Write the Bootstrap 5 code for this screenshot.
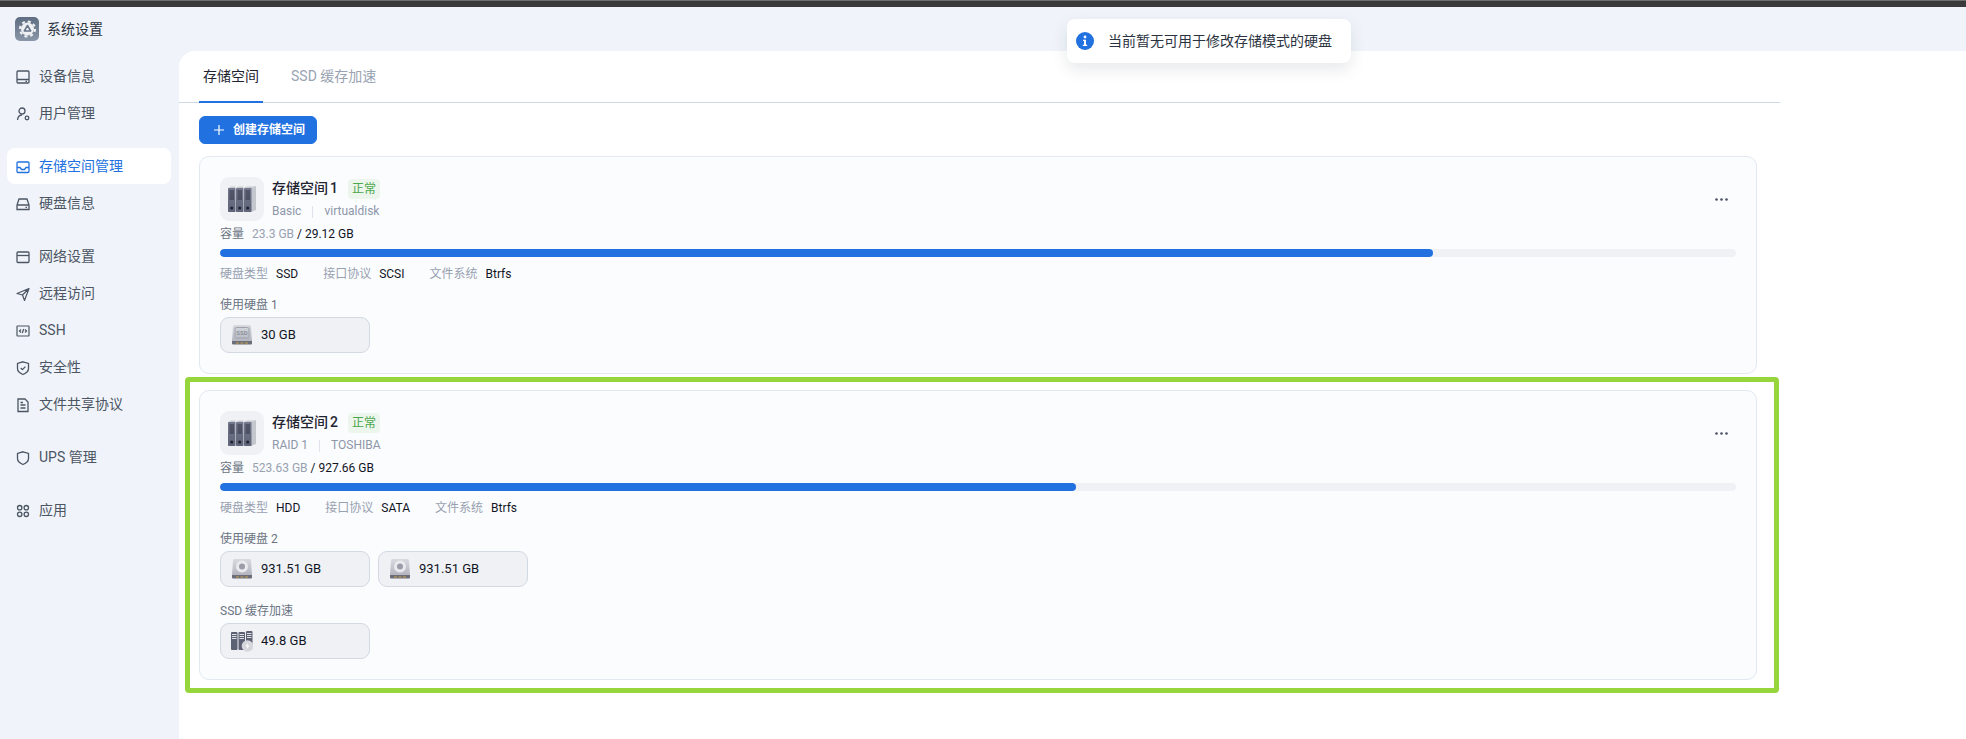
<!DOCTYPE html>
<html lang="zh-CN"><head><meta charset="utf-8"><title>系统设置</title>
<link href="https://cdn.jsdelivr.net/npm/bootstrap@5.3.0/dist/css/bootstrap.min.css" rel="stylesheet">
<style>
html,body{height:100%}
body{margin:0;background:#fff;font-family:Roboto,"Noto Sans CJK SC",sans-serif;color:#1f2430;font-size:12px;overflow:hidden}
.shell{height:739px;display:flex;flex-direction:column;position:relative;background:#f0f4fa}
.topline{height:7px;flex:none;background:#3a3a3a;border-top:1px solid #6e6e6e}
.apphead{height:44px;flex:none;padding:10px 15px 0;gap:8px;font-size:14px;line-height:24px;color:#2b3240}
.appicon{width:24px;height:24px;display:block}
.bodyrow{flex:1;min-height:0}
.side{width:179px;flex:none;padding:7px 8px 0 7px;gap:1px}
.side .nav-link{height:36px;padding:1px 8px 0;gap:8px;color:#4b5563;font-size:14px;border-radius:8px;display:flex;align-items:center}
.side .nav-link.active{background:#fff;color:#2271e0}
.side .nav-link svg{width:16px;height:16px;flex:none}
.grp{margin-top:16px}
.panel{flex:1;background:#fff;border-top-left-radius:16px;min-width:0}
.contentcol{width:1601px}
.tabbar{height:52px;border-bottom:1px solid #ced8e3;padding-left:20px;gap:8px}
.tabbar .nav-link{width:64px;height:52px;padding:0;margin:0;font-size:14px;color:#1f2430;border-bottom:2px solid #2271e0;display:flex;align-items:center;justify-content:center;border-radius:0}
.tabbar .nav-link.off{width:auto;border-bottom:0;color:#99a3b2;margin-left:20px;padding-bottom:2px}
.createbtn{margin:13px 0 12px 20px;width:118px;height:28px;padding:0 0 0 14px;font-size:12px;font-weight:600;background:#2271e0;border-color:#2271e0;border-radius:6px;gap:9px;display:flex;align-items:center}
.poolcard{margin-left:20px;width:1558px;background:#fbfcfe;border:1px solid #e2e8f1;border-radius:10px;padding:20px;position:relative}
.hilite{margin:3px 0 0 6px;width:1594px;height:316px;border:5px solid #96d53c;border-radius:4px;padding:8px 0 0 9px}
.hilite .poolcard{margin-left:0}
.poolpic{width:44px;height:44px;background:#f0f1f5;border-radius:9px;flex:none}
.pooltitle{font-size:14px;font-weight:500;line-height:22px;height:22px;color:#1f2430}
.pooltitle em{font-style:normal;margin-left:2px}
.okbadge{background:#edf6ec;color:#4ca64c;font-size:12px;font-weight:400;padding:0;width:32px;height:20px;line-height:20px;border-radius:4px;margin:2px 0 0 10px}
.subline{color:#8d97a8;height:19px;line-height:19px;margin-top:3px}
.subline i{display:block;width:1px;height:12px;background:#e0e4ea;margin:0 11px}
.capline{height:16px;line-height:16px;margin-top:4px;padding-top:1px;color:#1f2430}
.capline span.lbl{color:#6b7482;margin-right:8px}
.capline span.mut{color:#98a1b0}
.capline strong{font-weight:400;color:#11151f}
.capbar{height:8px;margin-top:8px;background:#eff1f4;border-radius:4px}
.capbar .progress-bar{background:#2271e0;border-radius:4px}
.metaline{margin-top:8px;height:16px;line-height:16px;padding-top:1px}
.metaline span{color:#98a1b0;margin-right:8px}
.metaline b{font-weight:400;color:#11151f;margin-right:25px}
.disklabel{color:#6b7482;height:16px;line-height:16px;margin-top:16px}
.chip{width:150px;height:36px;background:#eff1f5;border:1px solid #d2d9e3;border-radius:9px;padding:0 0 0 10px;gap:8px;font-size:13px;font-weight:400;color:#11151f;margin-top:4px}
.chip svg{width:22px;height:22px;flex:none}
.moredots{position:absolute;right:28px;top:41px;width:13px;height:3px}
.toast-box{position:absolute;left:1067px;top:19px;width:284px;height:44px;background:#fff;border-radius:8px;box-shadow:0 6px 16px rgba(20,30,50,.1);padding-left:9px;gap:14px;font-size:14px;color:#2b3240;z-index:5}
.defsvg{position:absolute;width:0;height:0}
</style></head>
<body>
<svg class="defsvg">
<defs>
<linearGradient id="gBody" x1="0" y1="0" x2="0" y2="1"><stop offset="0" stop-color="#d8dae0"/><stop offset="1" stop-color="#b3b6bf"/></linearGradient>
<linearGradient id="gFace" x1="0" y1="0" x2="0" y2="1"><stop offset="0" stop-color="#74788c"/><stop offset="1" stop-color="#5f6377"/></linearGradient>
<linearGradient id="gApp" x1="0" y1="0" x2="0" y2="1"><stop offset="0" stop-color="#5f6d82"/><stop offset="1" stop-color="#8a97a8"/></linearGradient>
<symbol id="binders" viewBox="0 0 44 44">
<path d="M31 11l5-2v24l-5 2z" fill="#c5c7cf"/>
<g fill="url(#gFace)"><rect x="8" y="11" width="7.500" height="24" rx=".8"/><rect x="16" y="11" width="7.500" height="24" rx=".8"/><rect x="24" y="11" width="7.500" height="24" rx=".8"/></g>
<path d="M8 11l3-1.500h4.500V11zM16 11l3-1.500h4.500V11zM24 11l3-1.500h9L31.500 11z" fill="#c9cbd3"/>
<g stroke="#2a2e40" stroke-width=".9"><path d="M9.500 14h4.500M9.500 16h4.500M9.500 18h4.500M9.500 20h4.500M9.500 22h4.500M17.500 14h4.500M17.500 16h4.500M17.500 18h4.500M17.500 20h4.500M17.500 22h4.500M25.500 14h4.500M25.500 16h4.500M25.500 18h4.500M25.500 20h4.500M25.500 22h4.500"/></g>
<g fill="#1c2030"><circle cx="11.700" cy="31" r="1.500"/><circle cx="19.700" cy="31" r="1.500"/><circle cx="27.700" cy="31" r="1.500"/></g>
</symbol>
<symbol id="ssdico" viewBox="0 0 22 22">
<path d="M3.500 1h15a1.500 1.500 0 0 1 1.500 1.500l1 14.500H1L2 2.500A1.500 1.500 0 0 1 3.500 1z" fill="url(#gBody)"/>
<rect x="4" y="3.500" width="14" height="10.500" rx="1.500" fill="none" stroke="#9ea2ac"/>
<text x="11" y="11" text-anchor="middle" font-size="6" font-weight="700" fill="#8f939d" font-family="Roboto">SSD</text>
<path d="M1 17h20v2.500a1 1 0 0 1-1 1H2a1 1 0 0 1-1-1z" fill="#6b6e78"/>
<path d="M5 19h3M9.500 19h3M14 19h3" stroke="#c9a24a"/>
</symbol>
<symbol id="hddico" viewBox="0 0 22 22">
<path d="M3.500 1h15a1.500 1.500 0 0 1 1.500 1.500l1 14.500H1L2 2.500A1.500 1.500 0 0 1 3.500 1z" fill="url(#gBody)"/>
<circle cx="11" cy="8.500" r="6" fill="#e9eaee"/><circle cx="11" cy="8.500" r="3" fill="#9a9da7"/>
<path d="M1 17h20v2.500a1 1 0 0 1-1 1H2a1 1 0 0 1-1-1z" fill="#6b6e78"/>
<path d="M5 19h3M9.500 19h3M14 19h3" stroke="#c9a24a"/>
</symbol>
<symbol id="cacheico" viewBox="0 0 22 22">
<g fill="#5c6174"><rect x="0" y="2" width="6.500" height="18" rx="1"/><rect x="7.500" y="2" width="6.500" height="18" rx="1"/><rect x="15" y="1" width="6.500" height="14" rx="1"/></g>
<path d="M1 4.500h4.500M1 6.500h4.500M1 8.500h4.500M8.500 4.500H13M8.500 6.500H13M8.500 8.500H13M16 3.500h4.500M16 5.500h4.500M16 7.500h4.500" stroke="#dfe1e6"/>
<circle cx="16.500" cy="16" r="5.800" fill="#d5d7dd"/><path d="M17.500 12.500l-3 4h2l-1 3 3-4h-2z" fill="#fff"/>
</symbol>
</defs></svg>
<div class="shell">
<div class="topline"></div>
<div class="apphead d-flex">
<svg class="appicon" viewBox="0 0 24 24"><rect width="24" height="24" rx="5" fill="url(#gApp)"/><circle cx="12.500" cy="12" r="6.500" fill="#eef0f3"/><circle cx="12.500" cy="12" r="7.500" fill="none" stroke="#eef0f3" stroke-width="2.200" stroke-dasharray="3 2.890"/><path d="M12.500 8.500l3.200 5.500h-6.400z" fill="none" stroke="#66758a" stroke-width="1.500" stroke-linejoin="round"/></svg>
<span>系统设置</span>
</div>
<div class="bodyrow d-flex">
<nav class="side nav flex-column flex-nowrap">
<a class="nav-link" href="#"><svg viewBox="0 0 16 16" fill="none" stroke="currentColor" stroke-width="1.300"><rect x="2" y="2" width="12" height="12" rx="1"/><path d="M2 10.500h12M10.500 12.300h1.500"/></svg>设备信息</a>
<a class="nav-link" href="#"><svg viewBox="0 0 16 16" fill="none" stroke="currentColor" stroke-width="1.300"><circle cx="7" cy="5" r="3"/><path d="M2.500 14c.3-3 2-5 4.500-5"/><circle cx="12" cy="12" r="1.800"/></svg>用户管理</a>
<a class="nav-link active grp" href="#"><svg viewBox="0 0 16 16" fill="none" stroke="currentColor" stroke-width="1.300"><rect x="2" y="3" width="12" height="10.500" rx="1"/><path d="M2 8.500h3l1.500 2h3l1.500-2h3"/></svg>存储空间管理</a>
<a class="nav-link" href="#"><svg viewBox="0 0 16 16" fill="none" stroke="currentColor" stroke-width="1.300"><path d="M4 3h8l2 6v4.500H2V9z"/><path d="M2 9h12M10.500 11.300h1.500"/></svg>硬盘信息</a>
<a class="nav-link grp" href="#"><svg viewBox="0 0 16 16" fill="none" stroke="currentColor" stroke-width="1.300"><rect x="2" y="3" width="12" height="10.500" rx="1"/><path d="M2 6.500h12"/></svg>网络设置</a>
<a class="nav-link" href="#"><svg viewBox="0 0 16 16" fill="none" stroke="currentColor" stroke-width="1.200" stroke-linejoin="round"><path d="M14 2.500L2 7.500l5.500 1.500 2 5.500zM7.500 9L14 2.500"/></svg>远程访问</a>
<a class="nav-link" href="#"><svg viewBox="0 0 16 16" fill="none" stroke="currentColor" stroke-width="1.200"><rect x="2" y="3" width="12" height="10" rx=".5"/><path d="M6 6.500L4.500 8 6 9.500M10 6.500L11.500 8 10 9.500M8.700 6L7.300 10"/></svg>SSH</a>
<a class="nav-link" href="#"><svg viewBox="0 0 16 16" fill="none" stroke="currentColor" stroke-width="1.300"><path d="M8 1.800l5.500 1.700v5c0 3-2.500 4.800-5.500 6-3-1.200-5.500-3-5.500-6v-5z"/><path d="M5.700 8l1.700 1.600 3-3"/></svg>安全性</a>
<a class="nav-link" href="#"><svg viewBox="0 0 16 16" fill="none" stroke="currentColor" stroke-width="1.300"><path d="M3 2h7l3 3v9.500H3z"/><path d="M5.500 8h5M5.500 11h5M5.500 5.500h2.500"/></svg>文件共享协议</a>
<a class="nav-link grp" href="#"><svg viewBox="0 0 16 16" fill="none" stroke="currentColor" stroke-width="1.300"><path d="M8 1.800l5.500 1.700v5c0 3-2.500 4.800-5.500 6-3-1.200-5.500-3-5.500-6v-5z"/></svg>UPS 管理</a>
<a class="nav-link grp" href="#"><svg viewBox="0 0 16 16" fill="none" stroke="currentColor" stroke-width="1.300"><circle cx="4.700" cy="4.700" r="2.200"/><circle cx="11.300" cy="4.700" r="2.200"/><circle cx="4.700" cy="11.300" r="2.200"/><circle cx="11.300" cy="11.300" r="2.200"/></svg>应用</a>
</nav>
<main class="panel">
<div class="contentcol">
<div class="tabbar nav">
<a class="nav-link" href="#">存储空间</a>
<a class="nav-link off" href="#">SSD 缓存加速</a>
</div>
<button class="btn btn-primary createbtn" type="button"><svg width="10" height="10" viewBox="0 0 10 10"><path d="M5 0v10M0 5h10" stroke="#fff" stroke-width="1.200"/></svg>创建存储空间</button>

<section class="poolcard">
<svg class="moredots" viewBox="0 0 13 3"><g fill="#4a5064"><circle cx="1.500" cy="1.500" r="1.300"/><circle cx="6.500" cy="1.500" r="1.300"/><circle cx="11.500" cy="1.500" r="1.300"/></g></svg>
<div class="d-flex gap-2">
<svg class="poolpic"><use href="#binders"/></svg>
<div>
<div class="d-flex align-items-start"><span class="pooltitle">存储空间<em>1</em></span><span class="badge okbadge">正常</span></div>
<div class="subline d-flex align-items-center">Basic<i></i>virtualdisk</div>
</div>
</div>
<div class="capline"><span class="lbl">容量</span><span class="mut">23.3 GB</span> <strong>/ 29.12 GB</strong></div>
<div class="progress capbar"><div class="progress-bar" style="width:80%"></div></div>
<div class="metaline"><span>硬盘类型</span><b>SSD</b><span>接口协议</span><b>SCSI</b><span>文件系统</span><b>Btrfs</b></div>
<div class="disklabel">使用硬盘 1</div>
<div class="chip d-flex align-items-center"><svg><use href="#ssdico"/></svg>30 GB</div>
</section>

<div class="hilite">
<section class="poolcard">
<svg class="moredots" viewBox="0 0 13 3"><g fill="#4a5064"><circle cx="1.500" cy="1.500" r="1.300"/><circle cx="6.500" cy="1.500" r="1.300"/><circle cx="11.500" cy="1.500" r="1.300"/></g></svg>
<div class="d-flex gap-2">
<svg class="poolpic"><use href="#binders"/></svg>
<div>
<div class="d-flex align-items-start"><span class="pooltitle">存储空间<em>2</em></span><span class="badge okbadge">正常</span></div>
<div class="subline d-flex align-items-center">RAID 1<i></i>TOSHIBA</div>
</div>
</div>
<div class="capline"><span class="lbl">容量</span><span class="mut">523.63 GB</span> <strong>/ 927.66 GB</strong></div>
<div class="progress capbar"><div class="progress-bar" style="width:56.45%"></div></div>
<div class="metaline"><span>硬盘类型</span><b>HDD</b><span>接口协议</span><b>SATA</b><span>文件系统</span><b>Btrfs</b></div>
<div class="disklabel">使用硬盘 2</div>
<div class="d-flex gap-2">
<div class="chip d-flex align-items-center"><svg><use href="#hddico"/></svg>931.51 GB</div>
<div class="chip d-flex align-items-center"><svg><use href="#hddico"/></svg>931.51 GB</div>
</div>
<div class="disklabel">SSD 缓存加速</div>
<div class="chip d-flex align-items-center"><svg><use href="#cacheico"/></svg>49.8 GB</div>
</section>
</div>
</div>
</main>
</div>
<div class="toast-box d-flex align-items-center"><svg width="18" height="18" viewBox="0 0 18 18"><circle cx="9" cy="9" r="9" fill="#2271e0"/><circle cx="9" cy="5" r="1.400" fill="#fff"/><path d="M7 7.800h3v5h1.200v1.200H6.800v-1.200H8V9H7z" fill="#fff"/></svg><span>当前暂无可用于修改存储模式的硬盘</span></div>
</div>
<script src="https://cdn.jsdelivr.net/npm/bootstrap@5.3.0/dist/js/bootstrap.bundle.min.js"></script>
</body></html>
